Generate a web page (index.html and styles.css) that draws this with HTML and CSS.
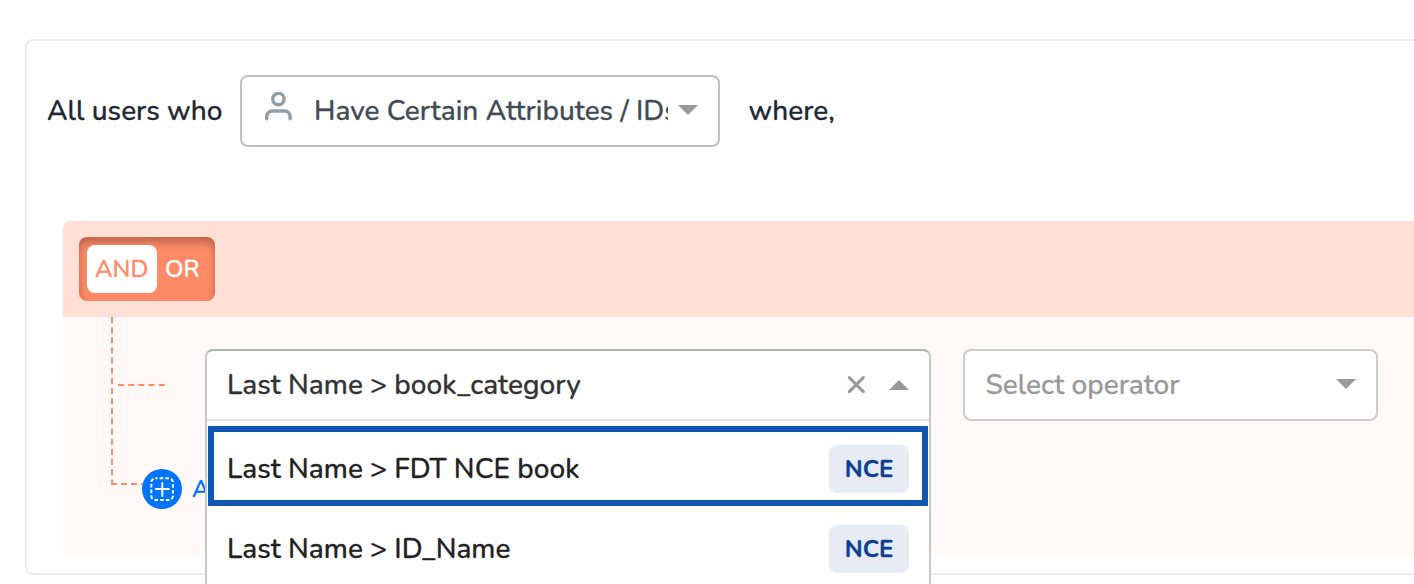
FILE: index.html
```html
<!DOCTYPE html>
<html lang="en">
<head>
<meta charset="utf-8">
<title>Segment filter</title>
<link rel="stylesheet" href="styles.css">
</head>
<body>
<main class="card">
  <div class="intro">
    <span class="label label-who">All users who</span>
    <div class="select select-type">
      <svg class="user-icon" width="28" height="30" viewBox="0 0 28 30" fill="none" stroke="#919ca5" stroke-width="3.4" stroke-linecap="round"><circle cx="14.4" cy="7.1" r="5.7"/><path d="M2.7 26.7v-2.2a5.5 5.5 0 0 1 5.5-5.5h12.4a5.5 5.5 0 0 1 5.5 5.5v2.2"/></svg>
      <span class="select-type-text">Have Certain Attributes / IDs</span>
      <svg class="arrow arrow-down" width="20" height="10" viewBox="0 0 20 10"><path d="M0 0h20L10 10z"/></svg>
    </div>
    <span class="label label-where">where,</span>
  </div>
  <section class="group">
    <header class="group-head">
      <div class="toggle"><span class="toggle-item on">AND</span><span class="toggle-item or">OR</span></div>
    </header>
    <div class="group-body">
      <div class="tree">
        <svg width="60" height="172" viewBox="0 0 60 172" fill="none" stroke="#ff8a65" stroke-width="2"><path d="M2 0v168" stroke-dasharray="6 4.15"/><path d="M8 68h47" stroke-dasharray="6 4.2"/><path d="M1 167h34" stroke-dasharray="6 4"/></svg>
      </div>
      <div class="rule">
        <div class="combo">
          <div class="combo-head">
            <span class="combo-value">Last Name &gt; book_category</span>
            <svg class="clear" width="18" height="18" viewBox="0 0 18 18" fill="none" stroke="#999" stroke-width="3" stroke-linecap="round"><path d="M2.3 1.6l14 14M16.3 1.6L2.3 15.6"/></svg>
            <svg class="arrow" width="20" height="10" viewBox="0 0 20 10"><path d="M0 10h20L10 0z"/></svg>
          </div>
          <div class="menu">
            <div class="option highlighted"><span class="option-book">Last Name &gt; FDT NCE book</span><span class="tag">NCE</span></div>
            <div class="option"><span class="option-id">Last Name &gt; ID_Name</span><span class="tag">NCE</span></div>
          </div>
        </div>
        <div class="select select-operator">
          <span class="placeholder">Select operator</span>
          <svg class="arrow arrow-down" width="20" height="10" viewBox="0 0 20 10"><path d="M0 0h20L10 10z"/></svg>
        </div>
      </div>
      <div class="add">
        <svg width="40" height="40" viewBox="0 0 40 40" fill="none" stroke="#fff" stroke-width="2"><circle cx="20" cy="20" r="20" fill="#0073ff" stroke="none"/><rect x="9.3" y="9.3" width="21.6" height="21.6" rx="4" stroke-dasharray="3.6 2.15" stroke-dashoffset="1.4"/><path d="M20.3 14v13M13.8 20h13" stroke-linecap="round"/></svg>
        <span class="add-text">A</span>
      </div>
    </div>
  </section>
</main>
</body>
</html>
```
FILE: styles.css
```css
* { box-sizing: border-box; }
html, body { margin: 0; height: 584px; overflow: hidden; background: #fff; }
body { font-family: Nunito, Lato, sans-serif; font-size: 28px; font-weight: 500; line-height: 40px; letter-spacing: .02px; -webkit-text-stroke: .3px; color: #1f2933; padding: 39px 0 0 25px; }
svg { display: block; flex: none; }
span { white-space: nowrap; }
.card { width: 1420px; height: 536px; border: 2px solid #ededed; border-radius: 8px; padding: 34px 0 0 20px; }
.intro { display: flex; align-items: center; height: 72px; }
.label-who { width: 193px; }
.label-where { margin-left: 28.5px; }
.select { display: flex; align-items: center; height: 72px; background: #fff; border-radius: 8px; }
.select-type { width: 480px; border: 2px solid #bfbfc5; padding: 0 20px 0 22px; color: #424c55; }
.user-icon { margin-bottom: 9px; }
.select-type-text { width: 354px; margin: 0 10px 0 22px; overflow: hidden; }
.arrow { fill: #999; }
.arrow-down { margin-bottom: 2px; }
.group { width: 1380px; height: 336px; margin: 74px 0 0 16px; border-radius: 8px; background: #fff9f7; }
.group-head { height: 96px; padding: 16px; background: #ffdfd6; border-radius: 8px 8px 0 0; }
.toggle { display: flex; width: 136px; height: 64px; padding: 8px; border-radius: 8px; background: #ff8a65; box-shadow: inset 0 5px 8px rgba(0,0,0,.28); font-size: 24px; line-height: 48px; }
.toggle-item { padding-left: 8px; color: #fff; }
.toggle-item.on { width: 70px; background: #fff; border-radius: 8px; color: #ff8a65; }
.group-body { display: grid; grid-template-columns: 94px 1fr; grid-template-rows: 152px 40px; }
.tree { grid-row: 1 / 3; grid-column: 1; padding-left: 47px; }
.rule { grid-row: 1; grid-column: 2; display: flex; gap: 32px; padding: 32px 0 0 48px; z-index: 2; }
.combo { width: 726px; height: 235px; flex: none; background: #fff; border: 2px solid #c8c8ca; border-top-color: #b3b3b3; border-bottom: 0; border-radius: 8px 8px 0 0; }
.combo-head { display: flex; align-items: center; height: 70px; padding: 0 20px; border-bottom: 2px solid #e6e6e6; color: #333; }
.combo-value { flex: 1; }
.clear { margin-right: 24px; }
.menu { padding: 5px 1px 0; color: #222; }
.option { display: flex; align-items: center; justify-content: space-between; height: 80px; padding: 0 19px; }
.option.highlighted { border: 6px solid #0f57b3; padding: 5px 13px 0; }
.option:last-child { padding-top: 5px; }
.tag { width: 80px; height: 48px; border-radius: 8px; background: #e7ebf4; color: #0c3f8f; font-size: 24px; font-weight: 700; line-height: 48px; text-align: center; }
.select-operator { width: 415px; flex: none; border: 2px solid #ccc; padding: 0 20px 0 20.5px; color: #999; }
.placeholder { flex: 1; }
.add { grid-row: 2; grid-column: 2; display: flex; align-items: center; gap: 10px; margin-left: -15px; color: #0073ff; font-size: 24px; }
```
